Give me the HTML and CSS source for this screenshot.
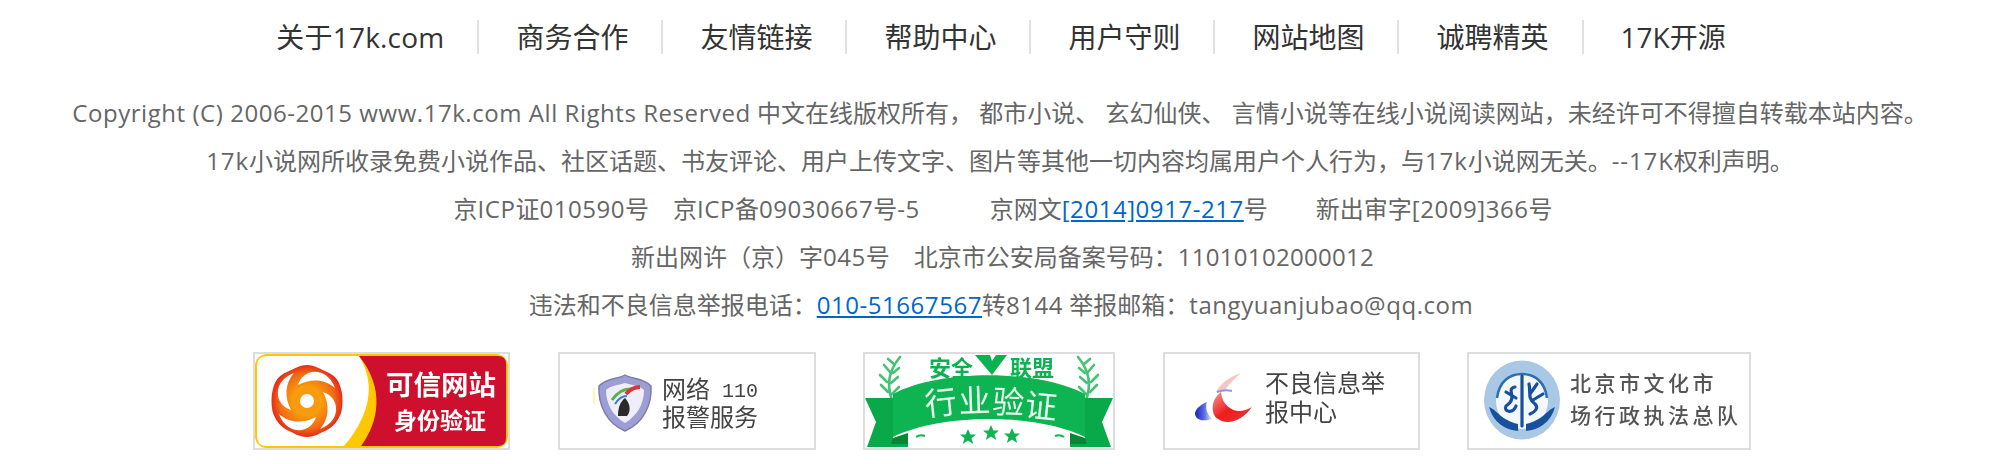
FILE: index.html
```html
<!DOCTYPE html>
<html lang="zh-CN">
<head>
<meta charset="utf-8">
<title>17k.com</title>
<link rel="stylesheet" href="styles.css">
</head>
<body>
<footer class="footer">
  <nav class="nav">
    <a href="#"><span class="lat-nav">关于17k.com</span></a>
    <a href="#">商务合作</a>
    <a href="#">友情链接</a>
    <a href="#">帮助中心</a>
    <a href="#">用户守则</a>
    <a href="#">网站地图</a>
    <a href="#">诚聘精英</a>
    <a href="#">17K开源</a>
  </nav>
  <div class="legal">
    <p><span class="lat">Copyright (C) 2006-2015 www.17k.com All Rights Reserved</span> 中文在线版权所有， 都市小说、 玄幻仙侠、 言情小说等在线小说阅读网站，未经许可不得擅自转载本站内容。</p>
    <p><span class="lat-w">17k</span>小说网所收录免费小说作品、社区话题、书友评论、用户上传文字、图片等其他一切内容均属用户个人行为，与<span class="lat-w">17k</span>小说网无关。<span class="lat-w">--17K</span>权利声明。</p>
    <p class="line-ids"><span class="gap-s">京<span class="lat">ICP</span>证<span class="lat">010590</span>号</span><span class="gap-l">京<span class="lat">ICP</span>备<span class="lat">09030667</span>号<span class="lat">-5</span></span><span class="gap-m">京网文<a class="lat" href="#">[2014]0917-217</a>号</span><span>新出审字<span class="lat">[2009]366</span>号</span></p>
    <p class="line-police"><span class="gap-s">新出网许（京）字<span class="lat">045</span>号</span><span>北京市公安局备案号码：<span class="lat-n">11010102000012</span></span></p>
    <p class="line-report">违法和不良信息举报电话：<a class="lat" href="#">010-51667567</a>转<span class="lat">8144</span> 举报邮箱：<span class="lat">tangyuanjubao@qq.com</span></p>
  </div>
  <div class="badges">
    <a class="badge badge-a" href="#">
      <svg viewBox="0 0 253 94">
        <defs>
          <radialGradient id="flower" gradientUnits="userSpaceOnUse" cx="52" cy="47" r="37">
            <stop offset="0.35" stop-color="#f8a20c"/>
            <stop offset="0.75" stop-color="#f26a14"/>
            <stop offset="1" stop-color="#e2231a"/>
          </radialGradient>
        </defs>
        <rect x="0" y="0" width="253" height="94" rx="12" fill="#ffc800"/>
        <path d="M12 2H104C118 25 120 55 89 92H12Q2 92 2 82V12Q2 2 12 2Z" fill="#fff"/>
        <path d="M104 2H243Q251 2 251 10V84Q251 92 243 92H106C124 68 130 34 104 2Z" fill="#ce0f2d"/>
        <path d="M52 11C60 11 65 15 72 18C81 22 84 27 86 35C88 42 88 52 86 59C83 67 79 72 72 76C65 79 60 83 52 83C44 83 39 79 32 76C25 72 21 67 18 59C16 52 16 42 18 35C20 27 23 22 32 18C39 15 44 11 52 11Z" fill="url(#flower)"/>
        <g class="petals">
          <path d="M43 31C48 14 72 12 80 34C70 25 56 24 43 31Z"/>
          <path transform="rotate(90 52 47)" d="M43 31C48 14 72 12 80 34C70 25 56 24 43 31Z"/>
          <path transform="rotate(180 52 47)" d="M43 31C48 14 72 12 80 34C70 25 56 24 43 31Z"/>
          <path transform="rotate(270 52 47)" d="M43 31C48 14 72 12 80 34C70 25 56 24 43 31Z"/>
        </g>
        <circle class="petal-core" cx="52" cy="47" r="10"/>
        <text class="t-badge-a1" x="131" y="41">可信网站</text>
        <text class="t-badge-a2" x="139" y="75">身份验证</text>
      </svg>
    </a>
    <a class="badge badge-b" href="#">
      <svg viewBox="0 0 254 94">
        <path d="M34 34V50" stroke="#fff2a0" stroke-width="1.5"/>
        <path d="M65 21C71 25 84 24 91 32C92 50 84 69 65 77C46 69 38 50 39 32C46 24 59 25 65 21Z" fill="#9d9ed4" stroke="#7c7da8" stroke-width="1.5"/>
        <path d="M65 29C72 31 80 32 84 36C84 50 77 62 65 69C53 62 46 50 46 36C50 32 58 31 65 29Z" fill="#efeef8"/>
        <path d="M52 46Q60 34 72 35" fill="none" stroke="#58b04a" stroke-width="3"/>
        <path d="M55 50Q60 42 67 42" fill="none" stroke="#3f7fd0" stroke-width="2"/>
        <path d="M66 40Q72 33 80 33" fill="none" stroke="#d83838" stroke-width="4"/>
        <path d="M65 44C69 48 72 56 67 62H58C58 54 60 48 65 44Z" fill="#2a2a2a"/>
        <text class="t-gray" x="102" y="44">网络</text>
        <text class="t-num" x="162" y="43">110</text>
        <text class="t-gray" x="102" y="72">报警服务</text>
      </svg>
    </a>
    <a class="badge badge-c" href="#">
      <svg viewBox="0 0 248 94">
        <g class="wreath">
          <path d="M27 46C21 30 25 15 35 3"/>
          <path d="M23 38L16 31M22 28L15 21M25 18L19 11M29 10L23 5M27 40L34 33M26 29L33 23M28 19L34 14"/>
          <path d="M221 46C227 30 223 15 213 3"/>
          <path d="M225 38L232 31M226 28L233 21M223 18L229 11M219 10L225 5M221 40L214 33M222 29L215 23M220 19L214 14"/>
        </g>
        <text class="t-green" x="64" y="22">安全</text>
        <path d="M110 1H125L127 7L131 1H142L127 21Z" fill="#0bb24f"/>
        <text class="t-green" x="145" y="22">联盟</text>
        <path d="M28 40C75 15 172 15 220 40V83C172 59 76 59 28 83Z" fill="#0db451"/>
        <path d="M0 44H28V84C32 86 38 84 43 80V93H2L11 68Z" fill="#09a949"/>
        <path d="M248 44H220V84C216 86 210 84 205 80V93H246L237 68Z" fill="#09a949"/>
        <path d="M28 84L43 79V90H26Z" fill="#088636"/>
        <path d="M220 84L205 79V90H222Z" fill="#088636"/>
        <path d="M51 83Q55 80 60 82M190 82Q195 80 199 83" stroke="#0db451" stroke-width="2" fill="none"/>
        <text class="t-banner" y="62 59 59 62" rotate="-6 -2 2 6" x="61 94 127 159">行业验证</text>
        <g fill="#0db451">
          <path d="M103 75L105.4 80.5H111L106.5 84.2L108.2 90L103 86.6L97.8 90L99.5 84.2L95 80.5H100.6Z"/>
          <path d="M126 71L128.4 76.5H134L129.5 80.2L131.2 86L126 82.6L120.8 86L122.5 80.2L118 76.5H123.6Z"/>
          <path d="M147 74L149.4 79.5H155L150.5 83.2L152.2 89L147 85.6L141.8 89L143.5 83.2L139 79.5H144.6Z"/>
        </g>
      </svg>
    </a>
    <a class="badge badge-d" href="#">
      <svg viewBox="0 0 253 94">
        <defs>
          <linearGradient id="bluefade" x1="0" x2="1" y1="0" y2="0">
            <stop offset="0" stop-color="#1a1fc8"/>
            <stop offset="0.55" stop-color="#5a6ee0"/>
            <stop offset="1" stop-color="#e8ecfb"/>
          </linearGradient>
          <linearGradient id="redfade" x1="0" x2="1" y1="0" y2="1">
            <stop offset="0" stop-color="#f79a9a"/>
            <stop offset="0.5" stop-color="#f01c1c"/>
            <stop offset="1" stop-color="#e33a44"/>
          </linearGradient>
        </defs>
        <path d="M51 38C55 30 64 23 76 19C68 26 62 32 60 37Z" fill="#f8c4c4"/>
        <path d="M52 38Q60 35 67 37" fill="none" stroke="#8a9bd8" stroke-width="2"/>
        <path d="M56 38C46 45 45 60 53 65C63 72 78 66 87 53C79 58 70 58 65 54C59 50 57 45 56 38Z" fill="url(#redfade)"/>
        <path d="M30 59C31 54 37 50 42 48C40 54 42 60 47 65C38 68 30 66 30 59Z" fill="url(#bluefade)"/>
        <text class="t-gray" x="100" y="38">不良信息举</text>
        <text class="t-gray" x="100" y="67">报中心</text>
      </svg>
    </a>
    <a class="badge badge-e" href="#">
      <svg viewBox="0 0 280 94">
        <ellipse cx="53" cy="46" rx="38" ry="39.5" fill="#a9c8e6"/>
        <ellipse cx="53" cy="47" rx="26" ry="28" fill="#f4f8fc"/>
        <path d="M28 44C30 28 40 20 53 20C66 20 76 28 78 44" fill="none" stroke="#2d6fb5" stroke-width="2.5"/>
        <g fill="none" stroke="#17519d" stroke-width="3.2" stroke-linecap="round">
          <path d="M53 22V72"/>
          <path d="M46 33C36 35 50 44 37 52C34 58 44 60 47 52M37 38L47 44"/>
          <path d="M60 30C62 38 58 44 66 50C70 54 66 58 61 60M68 30L61 40M74 40L64 46"/>
        </g>
        <path d="M20 53C28 56 32 66 49 70L49 77C36 76 24 68 20 53ZM86 53C78 56 74 66 57 70L57 77C70 76 82 68 86 53Z" fill="#17519d"/>
        <text class="t-wide" x="101" y="37">北京市文化市</text>
        <text class="t-wide" x="101" y="69">场行政执法总队</text>
      </svg>
    </a>
  </div>
</footer>
</body>
</html>
```
FILE: styles.css
```css
* { box-sizing: border-box; }
html, body { margin: 0; padding: 0; background: #fff; }
body { font-family: "Open Sans", "Noto Sans CJK SC", sans-serif; }
.footer { width: 2000px; height: 464px; overflow: hidden; color: #666; text-align: center; }
a { color: inherit; text-decoration: none; }

.nav { display: flex; justify-content: center; padding: 17px 4px 0 0; }
.nav a { font-size: 28px; line-height: 40px; color: #333; padding: 0 33px 0 39px; position: relative; }
.nav a + a::before { content: ""; position: absolute; left: 0; top: 3px; width: 2px; height: 34px; background: #e2e0e0; }
.lat-nav { letter-spacing: 0.2px; }

.legal { margin-top: 32px; font-size: 24px; line-height: 48px; }
.legal p { margin: 0; }
.legal a { color: #0066cc; text-decoration: underline; }
.lat { letter-spacing: 0.55px; }
.lat-w { letter-spacing: 0.9px; }
.lat-n { letter-spacing: 0.3px; }
.line-ids { padding-left: 6px; }
.line-police { padding-left: 5px; }
.line-report { padding-left: 2px; }
.gap-s { margin-right: 24px; }
.gap-l { margin-right: 70px; }
.gap-m { margin-right: 48px; }

.badges { display: flex; justify-content: center; gap: 47.5px; margin-top: 23px; padding-left: 4px; }
.badge { display: block; height: 98px; border: 2px solid #ddd; }
.badge svg { display: block; width: 100%; height: 100%; overflow: visible; filter: blur(0.6px); }
.badge-a { width: 257px; }
.badge-b { width: 258px; }
.badge-c { width: 252px; }
.badge-d { width: 257px; }
.badge-e { width: 284px; }

.petals { fill: #fff; }
.petal-core { fill: #fff; stroke: #f79a10; stroke-width: 6; }
.wreath { fill: none; stroke: #45c274; stroke-width: 2.6; stroke-linecap: round; }
.t-badge-a1 { font-size: 27.5px; font-weight: 700; fill: #fff; }
.t-badge-a2 { font-size: 23px; font-weight: 700; fill: #fff; }
.t-gray { font-size: 24px; fill: #444; }
.t-num { font-family: "Liberation Mono", monospace; font-size: 20px; fill: #444; }
.t-green { font-size: 22px; font-weight: 700; fill: #0bb24f; }
.t-banner { font-size: 32px; fill: #e8fbee; }
.t-wide { font-size: 21px; letter-spacing: 3.5px; font-weight: 500; fill: #555; }
```
